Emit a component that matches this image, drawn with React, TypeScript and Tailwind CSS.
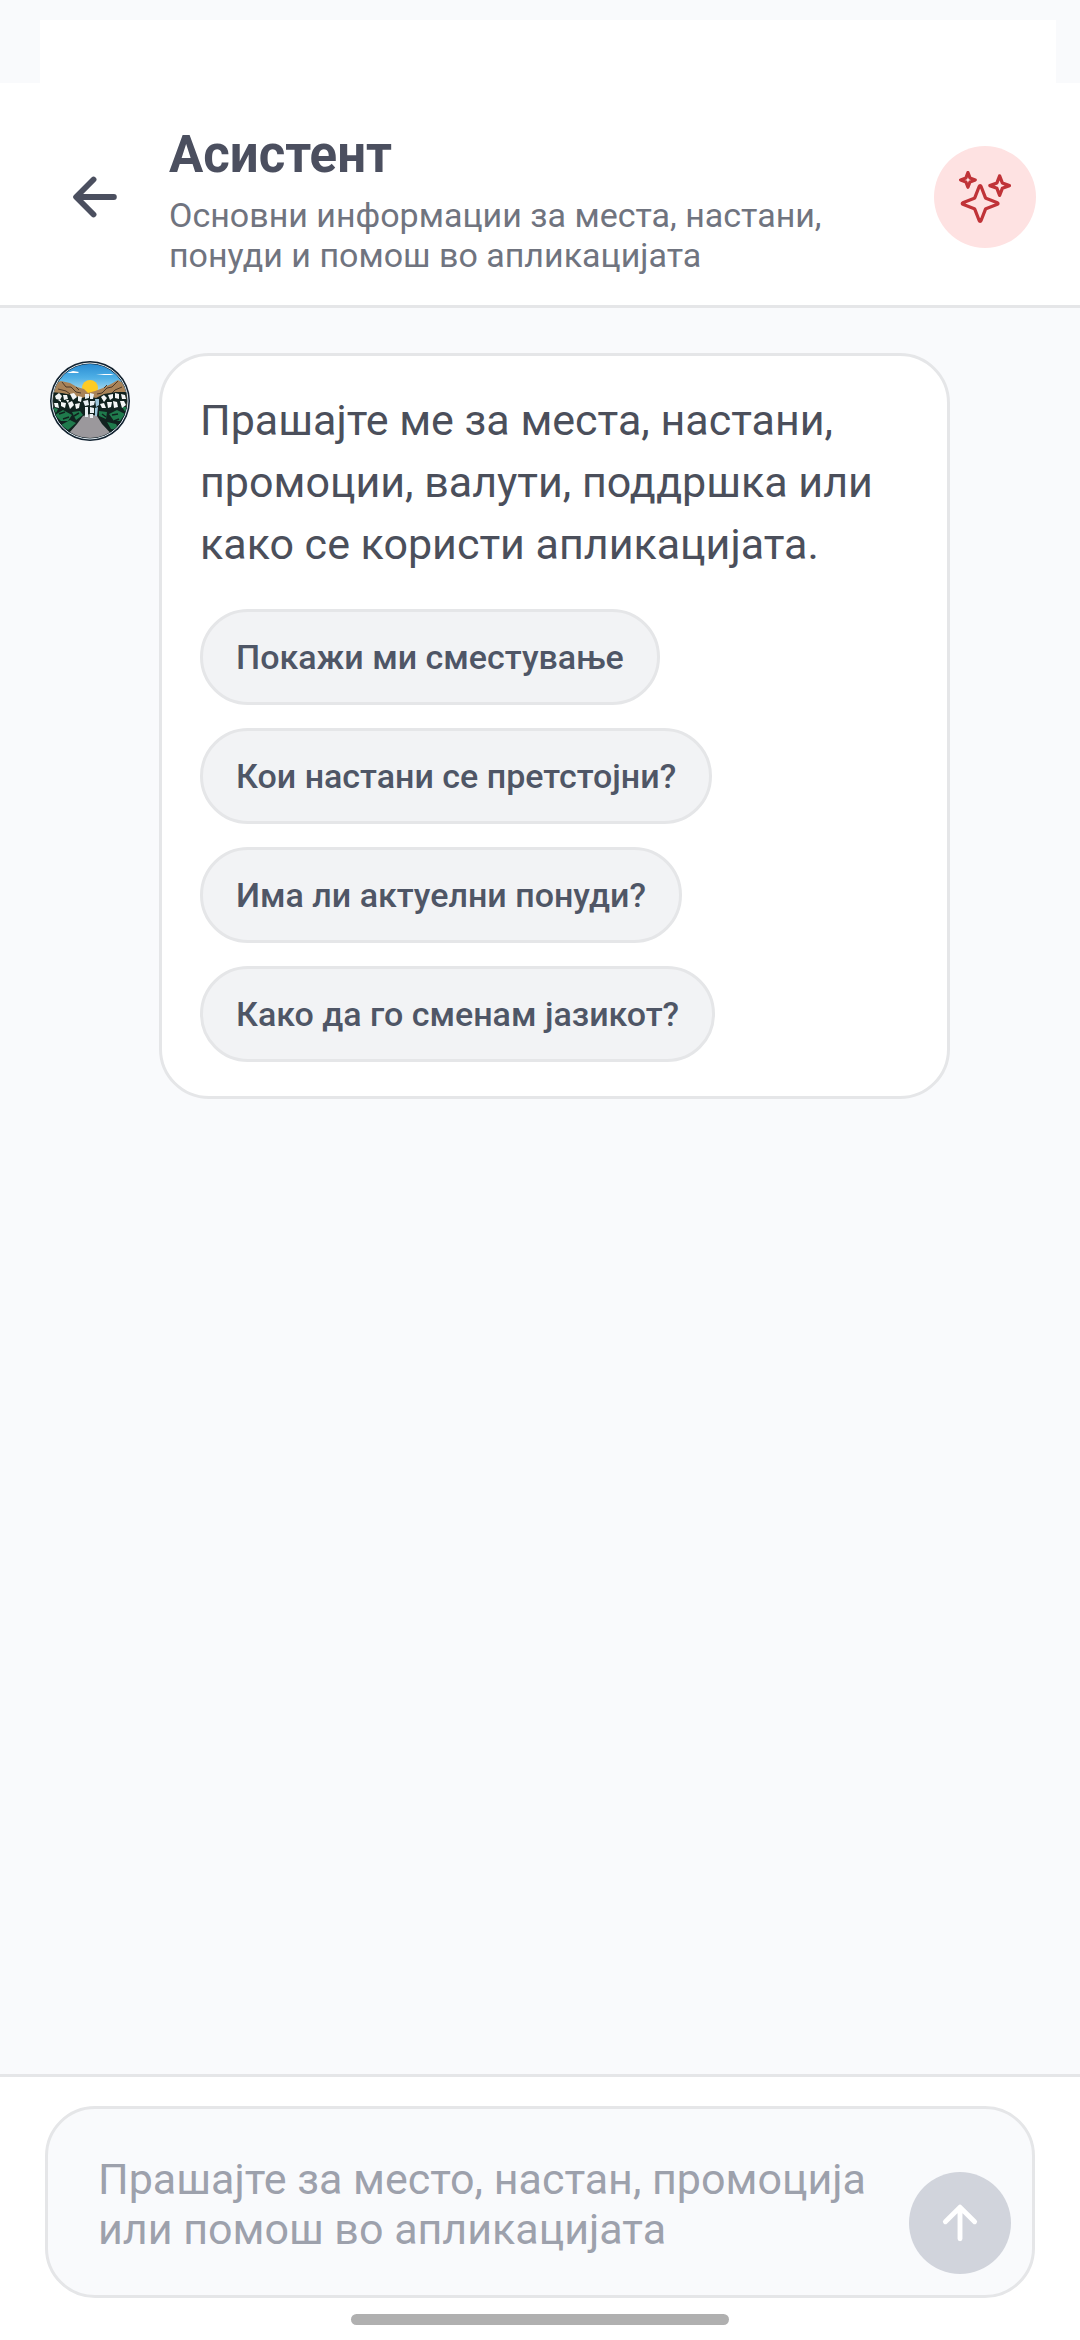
import { useState } from "react";
import { IoArrowBack, IoArrowUp, IoSparklesOutline } from "react-icons/io5";

const suggestions = [
  "Покажи ми сместување",
  "Кои настани се претстојни?",
  "Има ли актуелни понуди?",
  "Како да го сменам јазикот?",
];

function Avatar() {
  return (
    <svg viewBox="0 0 80 80" className="mt-2 size-20 shrink-0" aria-hidden="true">
      <defs>
        <clipPath id="avatar-clip">
          <circle cx="40" cy="40" r="37" />
        </clipPath>
        <linearGradient id="avatar-sky" x1="0" y1="0" x2="0" y2="1">
          <stop offset="0" stopColor="#2385cf" />
          <stop offset="0.5" stopColor="#4fb0e6" />
          <stop offset="1" stopColor="#c5e6ee" />
        </linearGradient>
      </defs>
      <circle cx="40" cy="40" r="40" fill="#12212f" />
      <circle cx="40" cy="40" r="38" fill="none" stroke="#dfe9ee" strokeWidth="1" />
      <g clipPath="url(#avatar-clip)">
        <rect width="80" height="34" fill="url(#avatar-sky)" />
        <path d="M17 12l6-2 6 1-1 1H17zM46 14l8-1 7 0 3 1H46z" fill="#fff" />
        <circle cx="40" cy="27" r="8" fill="#fdcb25" />
        {/* hills */}
        <path d="M0 24l11-4 9 2 7 4 7 2 4 4 7-2 8-3 8-4 7-4 12 7v20H0z" fill="#a98358" />
        <path
          d="M12 21l4 5 5 0 5 5 5 1M68 20l-6 6-5 1-5 5-5 1M8 28l8 2 4 3M72 26l-7 3-4 4M26 26l3 3M57 24l-3 3"
          stroke="#4a3828"
          strokeWidth="1"
          fill="none"
        />
        {/* bushes */}
        <path d="M0 31l12 1 10 2 10 3 6-2 8 2 8-4 12-2 14 0v49H0z" fill="#11221f" />
        <path
          d="M5 54l8-5 9 5-4 6-7 0zM59 53l8-4 8 4-5 7-6 0zM11 64l9-5 6 3-8 7zM57 61l9 2 3 6-8-1zM2 46l6 2-2 4zM72 46l6 0-2 6zM22 51l8-1 3 4-7 5zM49 50l8 1-1 7-7-3z"
          fill="#1f7a4c"
        />
        <path d="M9 53l6-2M13 58l6-2M62 54l6-1M64 60l5-2M24 55l5-3M52 53l4 3" stroke="#11221f" strokeWidth="1.5" />
        {/* path */}
        <path d="M33 55l7-2 7 2 5 8 16 17H12l15-17z" fill="#9b989c" />
        {/* flowers */}
        <path
          d="M5 35l4-3 3 3-2 4-4-1zM13 34l4 0 1 4-4 1zM20 33l4-1 3 4-4 3zM28 35l4 1-1 5-3-1zM4 42l4 0 1 5-4-1zM11 41l5 1-1 5-4-2zM18 42l4-2 2 4-4 4zM25 43l5-1-1 5-3 1zM8 39l3 0 0 2zM16 39l3 0-1 3zM51 36l3-2 3 3-3 4zM58 34l5-1 0 4-3 2zM65 32l4 1 0 5-4-1zM71 33l4 1 1 4-4 0zM50 43l4-1 2 5-4 0zM57 41l5 0-1 5-3 1zM63 40l4 1 1 5-4 1zM70 40l4 0 2 4-4 3z"
          fill="#f4f6f6"
        />
        <path d="M35 33l4 0 0 4-4 1zM40 32l4 1-1 5-3 0zM33 40l5-1 1 5-4 1zM40 40l5 0-1 4-4 1zM35 46l3 0 0 10-3 0zM40 46l4 1 0 5-4 0zM40 53l3 0 0 4-3 0z" fill="#e9eff2" />
        <path d="M45 38l4 0 0 6-3 2zM45 47l3-1-1 9-2 0z" fill="#9cc6dc" />
      </g>
    </svg>
  );
}

function SuggestionChip({ label, onSelect }: { label: string; onSelect: (label: string) => void }) {
  return (
    <button
      type="button"
      onClick={() => onSelect(label)}
      className="rounded-full border-3 border-[#e5e6e8] bg-[#f2f3f5] px-[33px] py-[23px] text-[34px] leading-[44px] font-medium text-[#4f5666]"
    >
      {label}
    </button>
  );
}

export default function App() {
  const [message, setMessage] = useState("");

  return (
    <div className="flex min-h-screen flex-col bg-[#f9fafc] font-[Roboto,sans-serif]">
      <div className="mx-6 mt-5 ml-10 h-[63px] bg-white" />

      <header className="flex items-center border-b-3 border-[#e5e6e8] bg-white pt-9 pr-11 pb-[30px] pl-16">
        <button type="button" aria-label="Назад" className="text-[#4b4f5f]">
          <IoArrowBack size={62} />
        </button>
        <div className="ml-[43px] flex-1 pr-20">
          <h1 className="text-[51px] leading-[72px] font-bold text-[#4b4f5f]">Асистент</h1>
          <p className="mt-1 text-[34px] leading-10 text-[#70747f]">
            Основни информации за места, настани, понуди и помош во апликацијата
          </p>
        </div>
        <div className="flex size-[102px] items-center justify-center rounded-full bg-[#fee2e2] text-[#c03338]">
          <IoSparklesOutline size={52} />
        </div>
      </header>

      <main className="flex flex-1 items-start gap-[29px] px-[50px] pt-[45px]">
        <Avatar />
        <div className="mr-20 flex-1 rounded-[50px] border-3 border-[#e5e6e8] bg-white px-[38px] pt-[33px] pb-[34px]">
          <p className="text-[43px] leading-[62px] text-[#4b4f5b]">
            Прашајте ме за места, настани, промоции, валути, поддршка или како се користи апликацијата.
          </p>
          <div className="mt-[34px] flex flex-col items-start gap-[23px]">
            {suggestions.map((label) => (
              <SuggestionChip key={label} label={label} onSelect={setMessage} />
            ))}
          </div>
        </div>
      </main>

      <footer className="border-t-3 border-[#e5e6e8] bg-white px-[45px] pt-[29px] pb-[15px]">
        <form
          onSubmit={(e) => e.preventDefault()}
          className="flex items-end rounded-[50px] border-3 border-[#e5e6e8] bg-[#f9fafc] pt-[45px] pr-[21px] pb-[21px] pl-[50px]"
        >
          <textarea
            rows={2}
            value={message}
            onChange={(e) => setMessage(e.target.value)}
            aria-label="Порака"
            placeholder="Прашајте за место, настан, промоција или помош во апликацијата"
            className="mb-5 block flex-1 resize-none overflow-hidden text-[43px] leading-[50px] text-[#4b4f5b] outline-none placeholder:text-[#9da1ac]"
          />
          <button
            type="submit"
            aria-label="Испрати"
            className="flex size-[102px] items-center justify-center rounded-full bg-[#d1d4dc] text-white"
          >
            <IoArrowUp size={52} />
          </button>
        </form>
        <div className="mx-auto mt-4 h-[11px] w-[378px] rounded-full bg-[#b0b0b0]" />
      </footer>
    </div>
  );
}
